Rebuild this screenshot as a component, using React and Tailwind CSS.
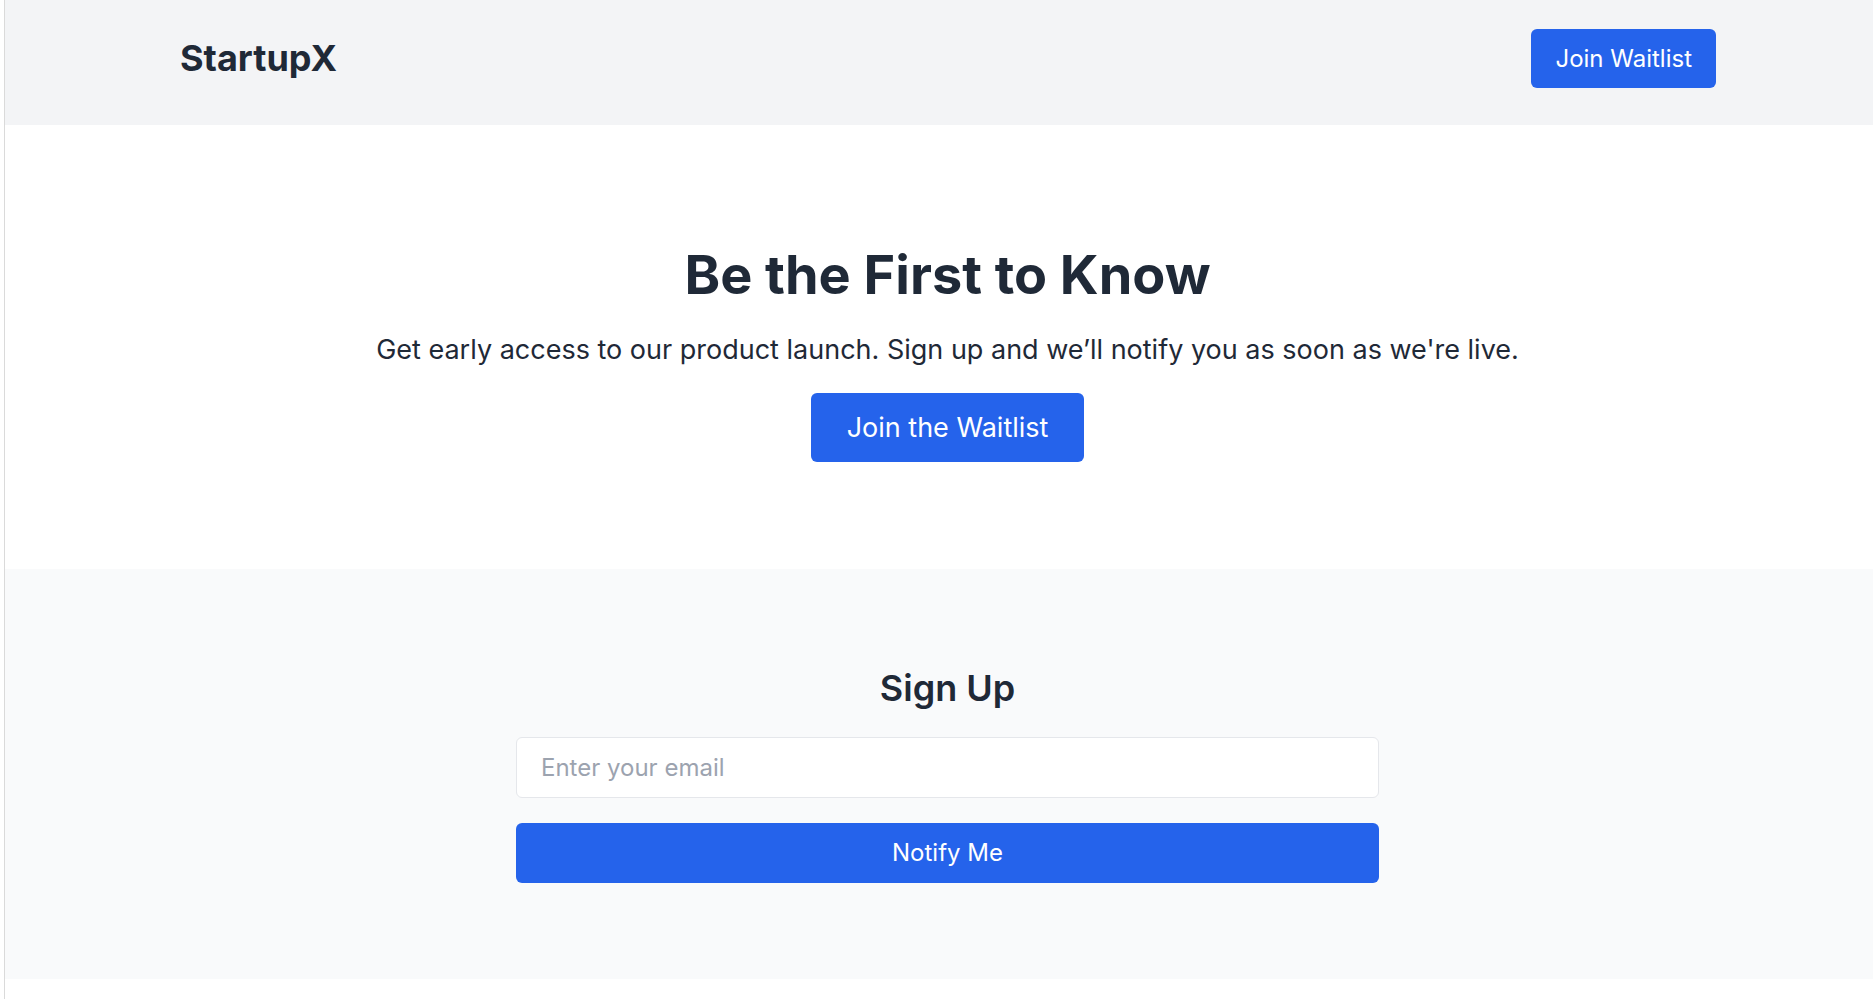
import React from 'react';

export default function App() {
  return (
    <div className="flex w-full min-h-[999px] overflow-hidden bg-white font-['Inter',sans-serif] text-[#1f2937]">
      {/* window frame edge */}
      <div className="w-[4px] shrink-0 bg-white" />
      <div className="w-px shrink-0 bg-[#dadada]" />

      <div className="w-[1885px] shrink-0 flex flex-col">
        {/* HEADER */}
        <header className="h-[125px] bg-[#f3f4f6] pt-[29px]">
          <div className="flex items-center justify-between pl-[175px] pr-[174px]">
            <div className="text-[36px] leading-[43px] font-bold">StartupX</div>
            <button className="h-[59px] px-[24px] rounded-[6px] bg-[#2563eb] text-white text-[24px] leading-none">
              Join Waitlist
            </button>
          </div>
        </header>

        {/* HERO */}
        <section className="bg-white pt-[123px] pb-[107px] flex flex-col items-center text-center">
          <h1 className="text-[54px] leading-[54px] font-bold">Be the First to Know</h1>
          <p className="mt-[29px] text-[27px] leading-[37.8px]">
            Get early access to our product launch. Sign up and we’ll notify you as soon as we're live.
          </p>
          <button className="mt-[24px] h-[69px] w-[273px] rounded-[6px] bg-[#2563eb] text-white text-[27px] leading-none">
            Join the Waitlist
          </button>
        </section>

        {/* SIGN UP */}
        <section className="bg-[#f9fafb] pt-[98px] pb-[96px] flex flex-col items-center">
          <h2 className="text-[36px] leading-[43.2px] font-semibold">Sign Up</h2>
          <div className="mt-[27px] w-[863px] flex flex-col gap-[25px]">
            <input
              type="email"
              placeholder="Enter your email"
              className="h-[61px] w-full rounded-[6px] border border-[#e5e7eb] bg-white px-[24px] text-[24px] outline-none placeholder:text-[#9ca3af]"
            />
            <button className="h-[60px] w-full rounded-[6px] bg-[#2563eb] text-white text-[24px] leading-none">
              Notify Me
            </button>
          </div>
        </section>

        <div className="flex-1 bg-white" />
      </div>
    </div>
  );
}
